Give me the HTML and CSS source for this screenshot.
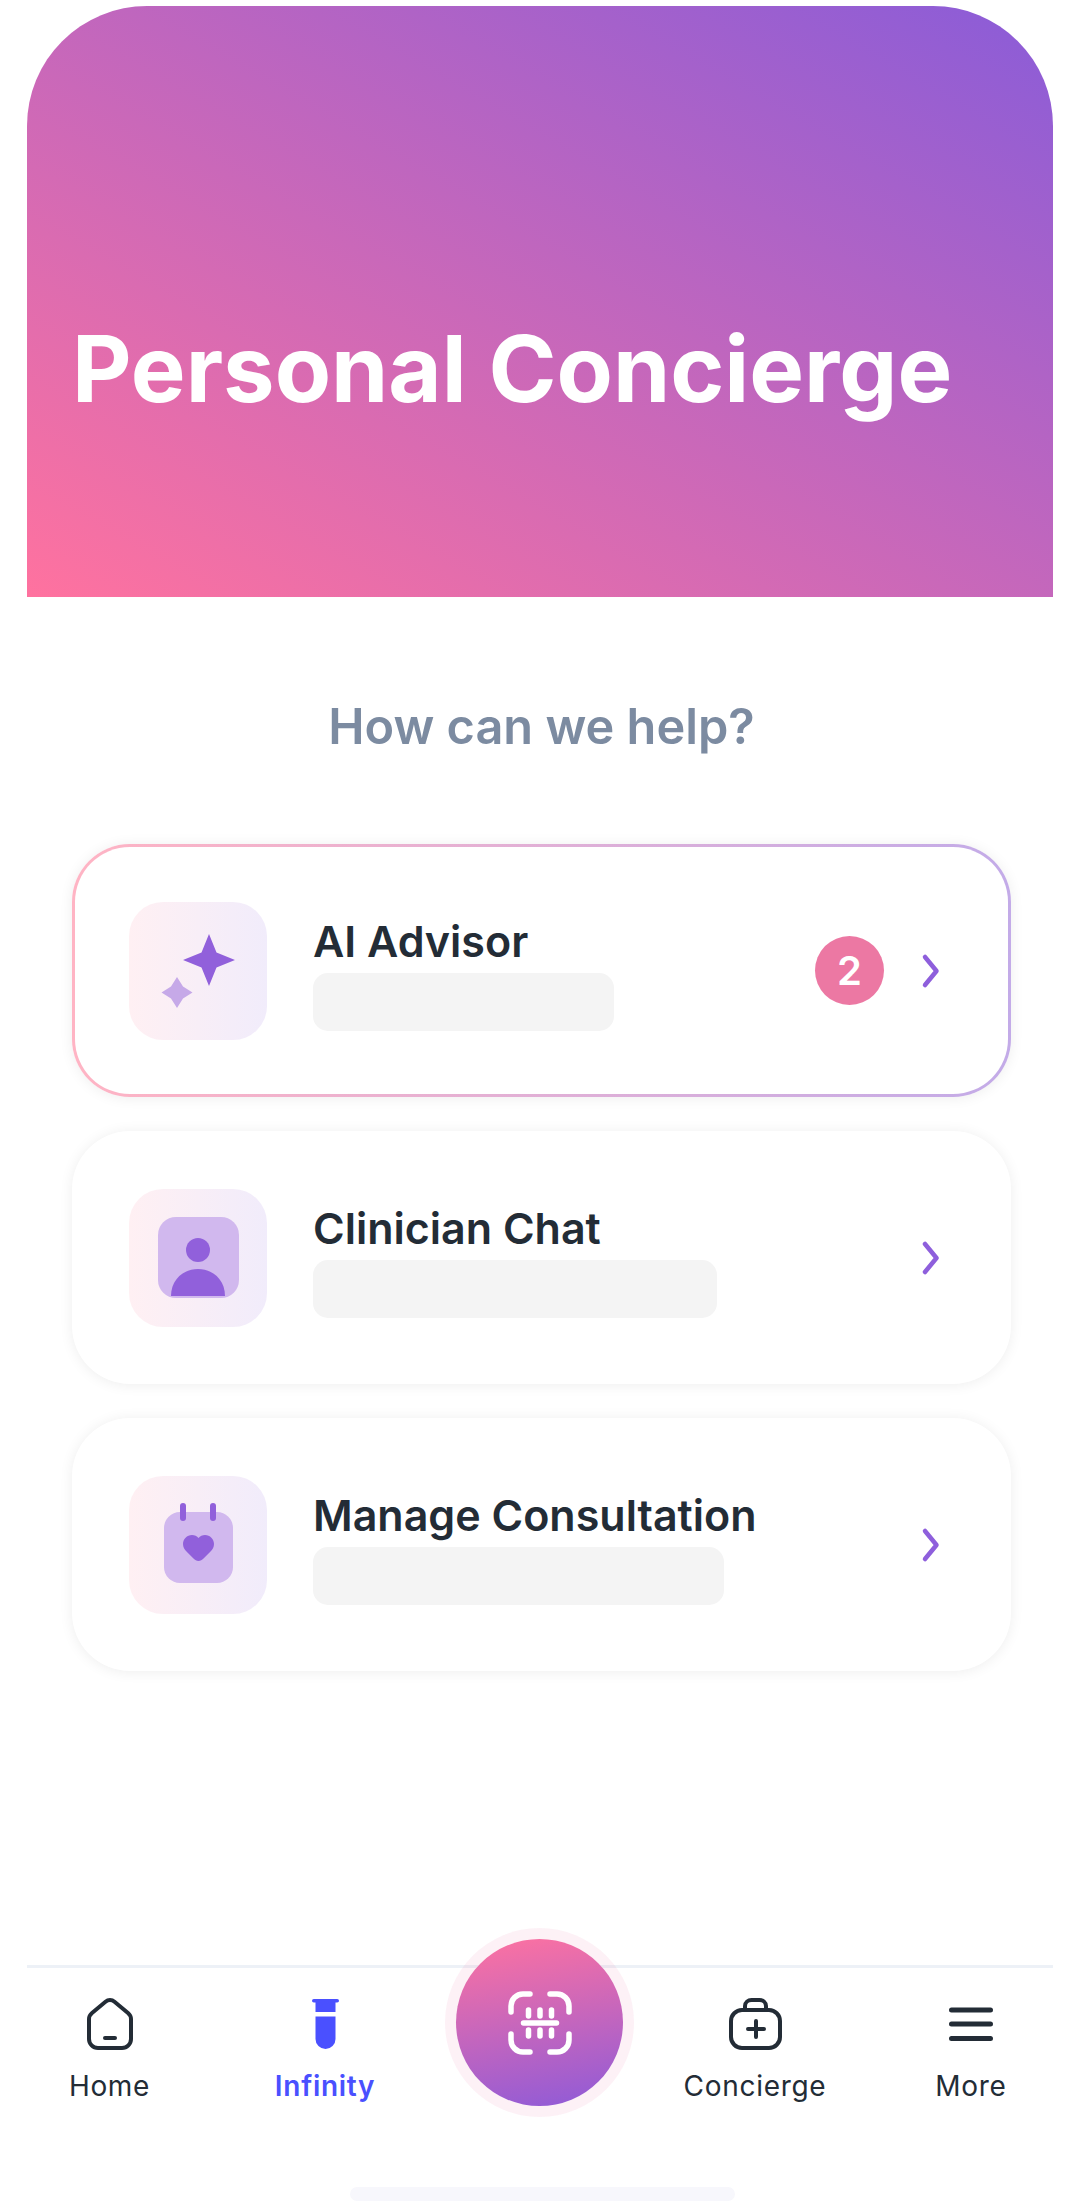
FILE: index.html
```html
<!DOCTYPE html>
<html lang="en">
<head>
  <meta charset="UTF-8" />
  <meta name="viewport" content="width=device-width, initial-scale=1.0"/>
  <title>Personal Concierge</title>
  <link rel="stylesheet" href="styles.css">
</head>
<body>
  <header class="hero">
    <h1>Personal Concierge</h1>
  </header>

  <main class="content">
    <h2>How can we help?</h2>

    <a class="card card-active">
      <div class="card-icon">
        <svg width="138" height="138" viewBox="0 0 138 138">
          <path fill="#9160db" d="M80 32 L87.5 50.5 L106 58 L87.5 65.5 L80 84 L72.5 65.5 L54 58 L72.5 50.5Z"/>
          <path fill="#c6a9e8" d="M48 75 L54 84.5 L63.5 90.5 L54 96.5 L48 106 L42 96.5 L32.5 90.5 L42 84.5Z"/>
        </svg>
      </div>
      <div class="card-text">
        <h3>AI Advisor</h3>
        <div class="bar bar-1"></div>
      </div>
      <span class="badge">2</span>
      <svg class="chevron" width="20" height="36" viewBox="0 0 20 36"><path d="M4 4 L15.5 18 L4 32"/></svg>
    </a>

    <a class="card">
      <div class="card-icon">
        <svg width="138" height="138" viewBox="0 0 138 138">
          <rect x="29" y="28" width="81" height="81" rx="18" fill="#d1b8ee"/>
          <circle cx="69" cy="61" r="12" fill="#9160db"/>
          <path fill="#9160db" d="M42 107 C42 91 54 80 69 80 C84 80 96 91 96 107Z"/>
        </svg>
      </div>
      <div class="card-text">
        <h3>Clinician Chat</h3>
        <div class="bar bar-2"></div>
      </div>
      <svg class="chevron" width="20" height="36" viewBox="0 0 20 36"><path d="M4 4 L15.5 18 L4 32"/></svg>
    </a>

    <a class="card">
      <div class="card-icon">
        <svg width="138" height="138" viewBox="0 0 138 138">
          <rect x="35" y="36" width="69" height="71" rx="16" fill="#d1b8ee"/>
          <rect x="51" y="27" width="6" height="18" rx="3" fill="#9160db"/>
          <rect x="81" y="27" width="6" height="18" rx="3" fill="#9160db"/>
          <path fill="#9160db" d="M69.5 85 c-2 0 -3.5 -1 -5 -2.5 l-7 -7 c-2 -2 -3.5 -4 -3.5 -7.5 c0 -5 4 -9 9 -9 c2.5 0 5 1 6.5 3 c1.5 -2 4 -3 6.5 -3 c5 0 9 4 9 9 c0 3.5 -1.5 5.5 -3.5 7.5 l-7 7 c-1.5 1.5 -3 2.5 -5 2.5z"/>
        </svg>
      </div>
      <div class="card-text">
        <h3>Manage Consultation</h3>
        <div class="bar bar-3"></div>
      </div>
      <svg class="chevron" width="20" height="36" viewBox="0 0 20 36"><path d="M4 4 L15.5 18 L4 32"/></svg>
    </a>
  </main>

  <footer class="footer">
    <nav class="tabbar">
      <a class="tab">
        <svg class="tab-icon" width="46" height="52" viewBox="0 0 46 52">
          <path d="M18.5 3.8 L5 15 C3 16.7 2 18.8 2 21 V41 C2 46 6 50 11 50 H35 C40 50 44 46 44 41 V21 C44 18.8 43 16.7 41 15 L27.5 3.8 C24.8 1.5 21.2 1.5 18.5 3.8Z"/>
          <path d="M18 40 H28"/>
        </svg>
        <span>Home</span>
      </a>
      <a class="tab tab-active">
        <svg width="27" height="52" viewBox="0 0 27 50" fill="#4a50ff">
          <rect x="0" y="0" width="27" height="3.6" rx="1.8"/>
          <rect x="3.5" y="3" width="20" height="10"/>
          <path d="M3.5 17.5 H23.5 V40 a10 10 0 0 1 -20 0Z"/>
        </svg>
        <span>Infinity</span>
      </a>
      <button class="fab">
        <svg width="64" height="64" viewBox="0 0 64 64">
          <path d="M3 21 V15 A12 12 0 0 1 15 3 H22"/>
          <path d="M42 3 H49 A12 12 0 0 1 61 15 V21"/>
          <path d="M61 43 V49 A12 12 0 0 1 49 61 H42"/>
          <path d="M22 61 H15 A12 12 0 0 1 3 49 V43"/>
          <path d="M15.5 32 H48.5"/>
          <path d="M20.5 19 V25 M32 19 V25 M43.5 19 V25 M20.5 39 V45 M32 39 V45 M43.5 39 V45"/>
        </svg>
      </button>
      <a class="tab">
        <svg class="tab-icon" width="53" height="52" viewBox="0 0 53 52">
          <rect x="2" y="12" width="49" height="38" rx="11"/>
          <path d="M16 11 V8 C16 4.5 19 2 22.5 2 H30.5 C34 2 37 4.5 37 8 V11"/>
          <path d="M27 23 V39 M19 31 H35"/>
        </svg>
        <span>Concierge</span>
      </a>
      <a class="tab">
        <svg class="tab-icon tab-icon-thick" width="44" height="52" viewBox="0 0 44 52">
          <path d="M2.5 12 H41.5 M2.5 26 H41.5 M2.5 40.5 H41.5"/>
        </svg>
        <span>More</span>
      </a>
    </nav>
    <div class="home-indicator"></div>
  </footer>
</body>
</html>
```

FILE: styles.css
```css
* {
  box-sizing: border-box;
}
body {
  margin: 0;
  min-height: 2210px;
  display: flex;
  flex-direction: column;
  background-color: #fff;
  color: #232c36;
  font-family: Inter, "Liberation Sans", sans-serif;
}
.hero {
  height: 591px;
  margin: 6px 28px 0 27px;
  padding: 313px 0 0 45px;
  border-radius: 120px 120px 0 0;
  background: linear-gradient(to top right, #ff729f, #8a5cd8);
}
h1 {
  margin: 0;
  color: #fff;
  font-size: 92px;
  line-height: 100px;
  font-weight: 700;
}
.content {
  display: flex;
  flex-direction: column;
  gap: 34px;
  padding: 0 70px 0 72px;
}
h2 {
  margin: 100px 0 53px;
  text-align: center;
  color: #7c8ba1;
  font-size: 48.7px;
  line-height: 60px;
  font-weight: 600;
}
.card {
  height: 253px;
  display: flex;
  align-items: center;
  padding: 0 67px 0 54px;
  border: 3px solid transparent;
  border-radius: 58px;
  background-color: #fff;
  box-shadow: 0 1px 14px rgba(0, 0, 0, 0.07);
}
.card-active {
  background: linear-gradient(#fff, #fff) padding-box,
    linear-gradient(90deg, #ffb4c4, #c3abe8) border-box;
}
.card-icon {
  width: 138px;
  height: 138px;
  flex-shrink: 0;
  border-radius: 34px;
  background: linear-gradient(90deg, #fff0f3, #f1ecfb);
}
.card-icon svg {
  display: block;
}
.card-text {
  margin-left: 46px;
}
h3 {
  margin: 0;
  font-size: 43px;
  line-height: 63px;
  font-weight: 600;
}
.bar {
  height: 58px;
  border-radius: 15px;
  background-color: #f4f4f4;
}
.bar-1 {
  width: 301px;
}
.bar-2 {
  width: 404px;
}
.bar-3 {
  width: 411px;
}
.badge {
  width: 69px;
  height: 69px;
  margin-left: auto;
  display: flex;
  align-items: center;
  justify-content: center;
  border-radius: 50%;
  background-color: #ec78a3;
  color: #fff;
  font-size: 40px;
  font-weight: 600;
}
.chevron {
  flex-shrink: 0;
  margin-left: auto;
  fill: none;
  stroke: #8e5fdc;
  stroke-width: 4.5;
  stroke-linecap: round;
  stroke-linejoin: round;
}
.badge + .chevron {
  margin-left: 37px;
}
.footer {
  margin-top: auto;
}
.tabbar {
  margin: 0 28px 0 27px;
  padding-top: 30px;
  display: grid;
  grid-template-columns: 216px 215px 214px 217px 215px;
  justify-content: center;
  border-top: 3px solid #edf1f7;
}
.tab {
  display: flex;
  flex-direction: column;
  align-items: center;
  gap: 19px;
  font-size: 28px;
  line-height: 34px;
  letter-spacing: 0.7px;
}
.tab-active {
  color: #4a50ff;
  font-weight: 600;
}
.tab-icon {
  fill: none;
  stroke: #232c36;
  stroke-width: 4;
  stroke-linecap: round;
  stroke-linejoin: round;
}
.tab-icon-thick {
  stroke-width: 5;
}
.fab {
  width: 167px;
  height: 167px;
  margin: -59px 0 -10px;
  padding: 0;
  justify-self: center;
  display: flex;
  align-items: center;
  justify-content: center;
  border: none;
  border-radius: 50%;
  background: linear-gradient(170deg, #ff72a0, #8e5ad8);
  box-shadow: 0 0 0 11px rgba(236, 120, 163, 0.1);
}
.fab svg {
  fill: none;
  stroke: #fff;
  stroke-width: 5.5;
  stroke-linecap: round;
}
.home-indicator {
  width: 385px;
  height: 14px;
  margin: 84px 0 9px 350px;
  border-radius: 7px;
  background-color: #f7f7fc;
}
```
